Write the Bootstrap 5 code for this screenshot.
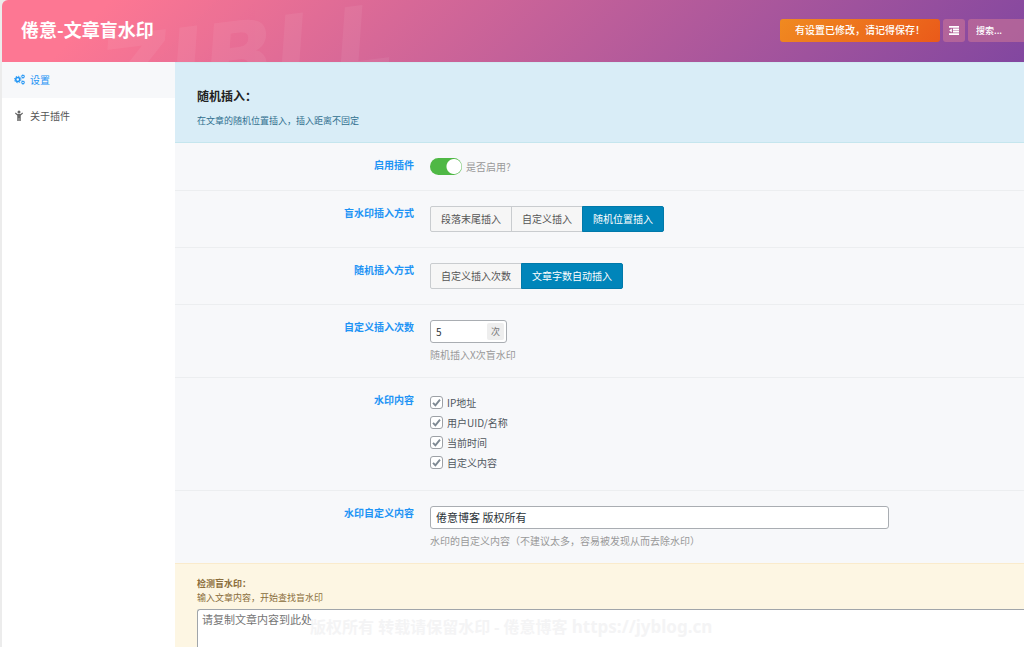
<!DOCTYPE html>
<html lang="zh-CN">
<head>
<meta charset="utf-8">
<meta name="viewport" content="width=device-width, initial-scale=1">
<title>倦意-文章盲水印</title>
<link href="https://cdn.jsdelivr.net/npm/bootstrap@5.3.0/dist/css/bootstrap.min.css" rel="stylesheet">
<style>
body{font-family:"Noto Sans CJK SC","Noto Sans",sans-serif;font-size:10px;line-height:15px;color:#50575e;background:#ececec}
input,textarea,button{font-family:inherit}
.shell{padding-left:2px}
.topbar{height:62px;border-top-left-radius:6px;padding:0 0 2px 19px;background:linear-gradient(135deg,#fd7793 10%,#8247a0 100%)}
.topbar h1{font-size:18px;line-height:22px;padding-bottom:2px;color:#fff}
.brand-mark{left:98px;top:11px;font:italic bold 94px/90px "DejaVu Sans",sans-serif;color:#fff;opacity:.06;transform:rotate(-7deg)}
.tools{gap:3px}
.save-btn{height:23px;padding:0 15px 1px;border:0;border-radius:3px;font-size:10px;line-height:15px;font-weight:500;color:#fff;background:linear-gradient(135deg,#f08a20,#ea5a1a)}
.glass{height:23px;border:0;background:rgba(210,120,150,.55);color:#fff}
.expand-btn{width:22px;border-radius:3px}
.search-box{width:56px;font-size:9px;font-weight:500;padding:0 8px;border-radius:3px 0 0 3px}
.search-box::placeholder{color:#fff;opacity:1}
.side{width:173px;background:#fff}
.side .nav-link{height:36px;padding:0 12px 2px;gap:5px;color:#555}
.side .nav-link.active{background:#f7f8fa;color:#1e94f5}
.side svg{width:11px;height:11px}
.content-area{background:#f7f8fa;min-width:0}
.note-info{background:#d9edf7;border-top:1px solid #d0ebf2;color:#31708f;padding:24px 22px 13px;font-size:9px;line-height:16px}
.note-info h2{font-size:12px;line-height:18px;color:#222}
.note-warn{background:#fdf6e3;border-top:1px solid #faebcc;color:#8a6d3b;padding:13px 0 0 22px;font-size:9px;line-height:14px}
.field{border-top:1px solid #eceef0;padding:15px 22px;gap:16px}
.note-info + .field{border-top-color:#c5e6ee}
.field-name{width:217px;line-height:13px;text-align:right;font-weight:700;color:#1e94f5}
.hint{color:#999}
.switch{width:32px;height:17px;min-height:0;margin:0;border:0;border-radius:9px;appearance:none;background:radial-gradient(circle at 24px 50%,#fff 7px,transparent 8px) #4fb845}
.choice .btn{height:26px;padding:0 10px 2px;border-color:#c9cccf;border-radius:2px;background:#f6f6f6;color:#555;font-size:10px;line-height:15px}
.choice .btn-check:checked + .btn{background:#0085ba;border-color:#0079aa;color:#fff}
.text-field{height:23px;border:1px solid #a9adb2;border-radius:3px;padding:0 5px 1px;font-size:11px;color:#2c3338;background:#fff}
.long{max-width:459px}
.count{width:77px;padding:0 2px 0 5px}
.count input{font-size:10px;color:#2c3338;min-width:0}
.unit{width:17px;height:17px;line-height:17px;background:#eee;font-size:9px;border-radius:2px;text-align:center;color:#777}
.ticks{gap:2px}
.tick{height:18px;gap:4px}
.tick input{appearance:none;width:13px;height:13px;margin:0;border:1px solid #9da1a6;border-radius:3px;background:#fff url("data:image/svg+xml,%3Csvg xmlns='http://www.w3.org/2000/svg' viewBox='0 0 11 11'%3E%3Cpath d='M2 5.8l2.4 2.6L9 2.6' fill='none' stroke='%237e8993' stroke-width='1.9'/%3E%3C/svg%3E")}
.paste{min-height:36px;border:1px solid #a0a5aa;border-width:1px 0 0 1px;border-radius:3px 0 0 0;padding:1px 4px;font-size:11px;line-height:16px;resize:none}
.paste::placeholder{color:#757575}
.overlay-mark{left:113px;top:7px;font-size:16px;line-height:22px;font-weight:700;color:#f4f4f5;font-family:"Noto Sans","Noto Sans CJK SC",sans-serif;pointer-events:none}
.overlay-url{font-size:17px}
</style>
</head>
<body>
<div class="shell d-flex flex-column min-vh-100">
  <header class="topbar d-flex align-items-center position-relative overflow-hidden">
    <span class="brand-mark position-absolute" aria-hidden="true">ZIBLL</span>
    <h1 class="fw-bold m-0 me-auto position-relative">倦意-文章盲水印</h1>
    <div class="tools d-flex position-relative">
      <button type="button" class="save-btn">有设置已修改，请记得保存！</button>
      <button type="button" class="glass expand-btn d-flex align-items-center justify-content-center p-0" aria-label="展开">
        <svg width="10" height="9" viewBox="0 0 10 9" fill="#fff"><path d="M0 0h10v1.800H0zM4 2.400h6v1.800H4zM4 4.800h6v1.800H4zM0 7.200h10V9H0zM2.800 2.400v4.200L.2 4.500z"/></svg>
      </button>
      <input type="search" class="glass search-box" placeholder="搜索..." aria-label="搜索">
    </div>
  </header>
  <div class="d-flex flex-grow-1">
    <nav class="side nav flex-column flex-shrink-0">
      <a href="#" class="nav-link active d-flex align-items-center">
        <svg viewBox="0 0 22 22" fill="none" stroke="currentColor"><circle cx="7.5" cy="11" r="4" stroke-width="3"/><circle cx="7.5" cy="11" r="6.500" stroke-width="2" stroke-dasharray="2.600 2.500"/><circle cx="18" cy="5" r="2.400" stroke-width="2"/><circle cx="18" cy="5" r="3.800" stroke-width="1.400" stroke-dasharray="1.500 1.500"/><circle cx="18" cy="17" r="2.400" stroke-width="2"/><circle cx="18" cy="17" r="3.800" stroke-width="1.400" stroke-dasharray="1.500 1.500"/></svg>设置</a>
      <a href="#" class="nav-link d-flex align-items-center">
        <svg viewBox="0 0 22 22" fill="#666"><circle cx="10" cy="4" r="3"/><path d="M3 5l4 3h6l4-3 1 2-4.500 4v11h-3v-6h-1v6h-3V11L2 7z"/></svg>关于插件</a>
    </nav>
    <main class="content-area flex-grow-1 d-flex flex-column">
      <section class="note-info">
        <h2 class="fw-bold mb-2">随机插入：</h2>
        <div>在文章的随机位置插入，插入距离不固定</div>
      </section>
      <div class="field d-flex">
        <label class="field-name flex-shrink-0" for="enable">启用插件</label>
        <div class="d-flex align-items-center">
          <input class="switch" type="checkbox" role="switch" id="enable" checked>
          <label class="hint ms-1" for="enable">是否启用?</label>
        </div>
      </div>
      <div class="field d-flex">
        <div class="field-name flex-shrink-0" id="l-mode">盲水印插入方式</div>
        <div class="choice btn-group" role="group" aria-labelledby="l-mode">
          <input class="btn-check" type="radio" name="mode" id="m1"><label class="btn d-flex align-items-center" for="m1">段落末尾插入</label>
          <input class="btn-check" type="radio" name="mode" id="m2"><label class="btn d-flex align-items-center" for="m2">自定义插入</label>
          <input class="btn-check" type="radio" name="mode" id="m3" checked><label class="btn d-flex align-items-center" for="m3">随机位置插入</label>
        </div>
      </div>
      <div class="field d-flex">
        <div class="field-name flex-shrink-0" id="l-rand">随机插入方式</div>
        <div class="choice btn-group" role="group" aria-labelledby="l-rand">
          <input class="btn-check" type="radio" name="rand" id="r1"><label class="btn d-flex align-items-center" for="r1">自定义插入次数</label>
          <input class="btn-check" type="radio" name="rand" id="r2" checked><label class="btn d-flex align-items-center" for="r2">文章字数自动插入</label>
        </div>
      </div>
      <div class="field d-flex">
        <label class="field-name flex-shrink-0" for="times">自定义插入次数</label>
        <div>
          <div class="text-field count d-flex align-items-center">
            <input class="border-0 p-0 flex-grow-1 bg-transparent" type="text" inputmode="numeric" id="times" value="5" size="1">
            <span class="unit">次</span>
          </div>
          <div class="hint mt-1">随机插入X次盲水印</div>
        </div>
      </div>
      <div class="field d-flex">
        <div class="field-name flex-shrink-0" id="l-content">水印内容</div>
        <div class="ticks d-grid mb-1" role="group" aria-labelledby="l-content">
          <label class="tick d-flex align-items-center"><input type="checkbox" checked>IP地址</label>
          <label class="tick d-flex align-items-center"><input type="checkbox" checked>用户UID/名称</label>
          <label class="tick d-flex align-items-center"><input type="checkbox" checked>当前时间</label>
          <label class="tick d-flex align-items-center"><input type="checkbox" checked>自定义内容</label>
        </div>
      </div>
      <div class="field d-flex">
        <label class="field-name flex-shrink-0" for="custom">水印自定义内容</label>
        <div class="flex-grow-1">
          <input class="text-field long w-100 d-block" type="text" id="custom" value="倦意博客 版权所有">
          <div class="hint mt-1">水印的自定义内容（不建议太多，容易被发现从而去除水印）</div>
        </div>
      </div>
      <section class="note-warn flex-grow-1 d-flex flex-column">
        <label for="paste" class="fw-bold">检测盲水印：</label>
        <div class="mb-1">输入文章内容，开始查找盲水印</div>
        <div class="position-relative flex-grow-1 d-flex">
          <textarea class="paste w-100" id="paste" rows="1" placeholder="请复制文章内容到此处"></textarea>
          <div class="overlay-mark position-absolute text-nowrap">版权所有 转载请保留水印 - 倦意博客 <span class="overlay-url">https://jyblog.cn</span></div>
        </div>
      </section>
    </main>
  </div>
</div>
<script src="https://cdn.jsdelivr.net/npm/bootstrap@5.3.0/dist/js/bootstrap.bundle.min.js"></script>
</body>
</html>
